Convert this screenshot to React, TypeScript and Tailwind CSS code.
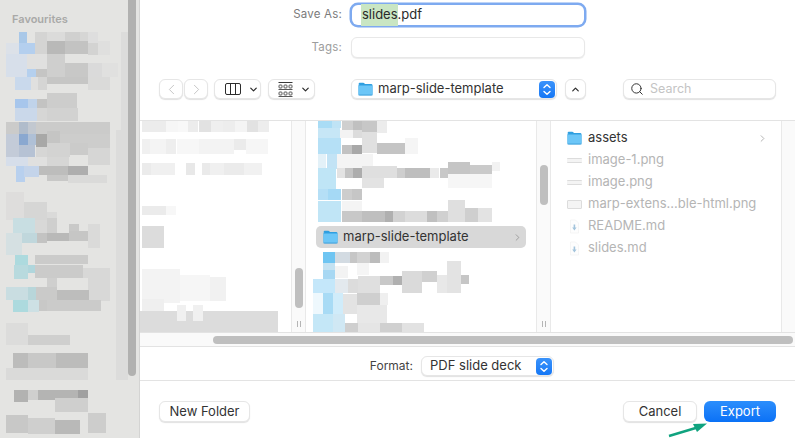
import { ChevronDown, ChevronLeft, ChevronRight, ChevronUp, Search } from "lucide-react";

type Block = [number, number, number, number, string];

// pixelated (censored) areas of the screenshot: x, y, w, h, colour
const sidebarBlocks: Block[] = [
  [121, 32, 9, 345, "#dcdcdb"], [116, 130, 14, 250, "#dcdcdb"],
  [19, 32, 8, 11, "#a9c8e8"], [19, 43, 16, 11, "#b4cfee"], [35, 32, 12, 22, "#d4d4d3"],
  [47, 32, 18, 9, "#dbdbda"], [65, 32, 15, 9, "#d0d0cf"], [80, 32, 8, 9, "#d6d6d5"], [88, 32, 10, 11, "#dedede"],
  [47, 41, 18, 13, "#b9b9b8"], [65, 41, 23, 13, "#c3c3c2"], [88, 43, 10, 12, "#d3d3d2"], [98, 41, 12, 14, "#dfdfde"],
  [6, 43, 13, 11, "#dce1e8"], [6, 54, 21, 23, "#d7dfea"], [27, 54, 20, 15, "#e0e0df"], [27, 69, 9, 8, "#b5d0ee"],
  [36, 69, 11, 8, "#c5c5c4"], [47, 54, 18, 23, "#cfcfce"], [65, 63, 23, 14, "#c8c8c7"], [88, 63, 14, 14, "#dadada"], [102, 63, 16, 14, "#e0e0df"],
  [15, 77, 16, 13, "#c9d9ec"], [31, 77, 7, 13, "#e0e0df"], [38, 77, 9, 13, "#d5d5d4"], [47, 77, 41, 7, "#c6c6c5"], [88, 77, 22, 13, "#dadad9"],
  [15, 99, 13, 9, "#a7c6ec"], [28, 99, 9, 9, "#c0d3ea"], [37, 99, 10, 9, "#c3c3c2"], [47, 93, 30, 15, "#cdcdcc"],
  [15, 108, 22, 13, "#cad8ea"], [37, 108, 10, 13, "#d6d6d5"], [47, 108, 31, 13, "#d2d2d1"],
  [6, 122, 104, 12, "#cbcbca"], [19, 122, 9, 12, "#b0bccb"], [28, 122, 8, 12, "#c2c8d0"],
  [6, 134, 13, 23, "#c3cbd8"], [19, 145, 16, 12, "#b6c2d4"], [19, 134, 9, 11, "#8aa8d0"], [28, 134, 8, 11, "#afc0d6"],
  [36, 134, 11, 13, "#a8a8a7"], [60, 134, 50, 14, "#cdcdcc"], [47, 131, 13, 12, "#c5c5c4"],
  [36, 147, 11, 10, "#d6d6d5"], [47, 143, 23, 14, "#d3d3d2"], [70, 143, 18, 12, "#cbcbca"], [88, 148, 22, 17, "#d6d6d5"],
  [6, 157, 22, 9, "#d6deea"], [28, 157, 19, 9, "#e0e0df"], [47, 157, 22, 9, "#d6d6d5"],
  [16, 166, 9, 16, "#b8d0ee"], [24, 166, 15, 11, "#c4d4ea"], [39, 166, 29, 9, "#bdbdbc"], [68, 166, 20, 9, "#aeaeae"],
  [47, 175, 21, 6, "#c8c8c7"], [68, 175, 39, 8, "#dadad9"],
  [6, 192, 18, 28, "#dedddc"], [24, 202, 23, 18, "#d6d6d5"], [47, 212, 10, 8, "#dadad9"],
  [13, 218, 22, 15, "#c8dee2"], [35, 220, 12, 13, "#d8d8d7"], [47, 218, 10, 15, "#cfcfce"], [69, 224, 10, 10, "#c9c9c8"], [88, 224, 12, 24, "#dadad9"],
  [6, 233, 16, 22, "#d5e0e2"], [22, 233, 15, 10, "#c0d7dc"], [37, 233, 10, 10, "#c3c3c2"], [47, 233, 22, 8, "#b9b9b8"], [69, 231, 19, 10, "#c6c6c5"],
  [15, 255, 13, 10, "#addade"], [35, 255, 53, 9, "#cbcbca"],
  [14, 265, 14, 14, "#b8dade"], [28, 265, 7, 8, "#b0d6dc"], [35, 265, 48, 13, "#cbcbca"], [83, 268, 27, 10, "#d8d8d7"],
  [47, 278, 10, 12, "#cfcfce"], [88, 278, 22, 23, "#d8d8d7"],
  [6, 287, 22, 13, "#c9dde1"], [28, 287, 8, 13, "#b8d6da"], [36, 287, 21, 13, "#cacac9"], [57, 290, 32, 11, "#bdbdbc"],
  [13, 300, 15, 12, "#addade"], [28, 300, 11, 12, "#cde0e4"], [39, 300, 8, 11, "#c8c8c7"], [47, 300, 54, 11, "#cbcbca"],
  [6, 323, 22, 22, "#dcdcdb"], [28, 335, 42, 10, "#cfcfce"],
  [13, 353, 15, 15, "#bcbcbb"], [28, 353, 28, 15, "#c8c8c7"], [56, 353, 32, 15, "#bcbcbb"], [6, 368, 82, 12, "#dadad9"],
  [14, 390, 14, 12, "#b2b2b1"], [28, 390, 10, 10, "#cfcfce"], [38, 390, 40, 10, "#b4b4b3"], [78, 390, 10, 10, "#a0a0a0"], [55, 398, 33, 14, "#cfcfce"],
  [6, 415, 22, 18, "#c8c8c7"], [28, 418, 27, 16, "#cfcfce"], [55, 420, 25, 14, "#b9b9b8"], [88, 413, 18, 20, "#cdcdcc"],
];

// offset by column origin (x - 140, y - 121)
const firstColumnBlocks: Block[] = [
  [2, 0, 24, 11, "#ececec"], [26, 0, 12, 11, "#f6f6f6"], [38, 0, 10, 11, "#f8f8f8"], [48, 0, 10, 11, "#ececec"], [59, 0, 12, 11, "#e2e2e2"], [71, 0, 12, 11, "#efefef"], [83, 0, 12, 11, "#ededed"], [95, 0, 12, 11, "#f4f4f4"], [107, 0, 11, 11, "#e2e2e2"], [118, 0, 11, 11, "#ededed"],
  [2, 18, 10, 15, "#f0f0f0"], [10, 18, 17, 15, "#f4f4f4"], [26, 18, 10, 15, "#eeeeee"], [37, 18, 22, 15, "#f7f7f7"], [59, 18, 35, 15, "#f3f3f3"], [94, 18, 12, 11, "#ebebeb"], [106, 18, 22, 15, "#f6f6f6"],
  [2, 42, 9, 12, "#ebebeb"], [11, 42, 24, 12, "#f0f0f0"], [46, 42, 9, 12, "#e8e8e8"], [62, 42, 8, 12, "#eaeaea"], [70, 42, 14, 12, "#f0f0f0"], [84, 42, 20, 12, "#ebebeb"], [104, 42, 18, 12, "#f1f1f1"],
  [2, 85, 24, 9, "#ebebeb"], [26, 85, 10, 9, "#f7f7f7"], [2, 105, 22, 22, "#dcdcdc"],
  [2, 148, 38, 34, "#f3f3f3"], [40, 154, 30, 26, "#f6f6f6"], [70, 156, 16, 24, "#f1f1f1"], [2, 178, 22, 12, "#efefef"],
  [0, 190, 138, 22, "#dcdcdc"], [37, 184, 9, 16, "#f0f0f0"], [53, 184, 10, 16, "#f0f0f0"],
];

const secondColumnBlocks: Block[] = [
  [12, 0, 14, 7, "#a9dcf5"], [26, 0, 9, 7, "#bfe3f5"], [36, 0, 12, 12, "#cfcfcf"], [47, 0, 9, 12, "#c0c0c0"], [56, 0, 15, 12, "#c7c7c7"], [71, 0, 10, 12, "#ececec"],
  [12, 7, 22, 10, "#c6e6f6"], [34, 9, 13, 8, "#f3f3f3"], [47, 9, 9, 8, "#dcdcdc"], [56, 11, 15, 21, "#e0e0e0"],
  [12, 17, 23, 16, "#b5e0f6"], [36, 24, 10, 9, "#c2c2c2"], [46, 24, 10, 9, "#a8a8a8"], [71, 22, 29, 11, "#c4c4c4"], [99, 17, 13, 16, "#f5f5f5"],
  [12, 33, 8, 15, "#e3f1f8"], [21, 33, 10, 15, "#c2e3f5"], [31, 33, 36, 14, "#f4f4f4"],
  [12, 47, 18, 21, "#bfe5f6"], [31, 47, 8, 10, "#e3e3e3"], [39, 47, 8, 10, "#c4c4c4"], [47, 47, 9, 10, "#adadad"], [56, 45, 35, 12, "#dfdfdf"], [91, 47, 8, 10, "#cecece"],
  [99, 47, 25, 10, "#bebebe"], [124, 47, 9, 10, "#eaeaea"], [134, 47, 8, 10, "#c8c8c8"], [142, 41, 22, 12, "#c5c5c5"], [164, 44, 22, 9, "#cacaca"], [186, 41, 8, 9, "#f2f2f2"],
  [56, 57, 22, 10, "#e3e3e3"], [142, 53, 44, 14, "#f6f6f6"],
  [12, 68, 10, 11, "#b5dff6"], [22, 68, 13, 11, "#a5d9f5"], [36, 68, 10, 11, "#cdcdcd"], [46, 68, 10, 11, "#c6c6c6"],
  [12, 80, 23, 21, "#c0e5f6"], [36, 80, 20, 10, "#f4f4f4"], [36, 90, 20, 11, "#c8c8c8"], [56, 90, 23, 11, "#bfbfbf"], [79, 90, 8, 11, "#b0b0b0"], [87, 90, 12, 11, "#d2d2d2"],
  [99, 90, 22, 11, "#dcdcdc"], [121, 90, 10, 11, "#c0c0c0"], [131, 90, 11, 11, "#d0d0d0"], [142, 79, 17, 22, "#dfdfdf"], [159, 87, 13, 14, "#cfcfcf"], [172, 87, 14, 14, "#e3e3e3"],
  [17, 131, 12, 11, "#6fc5f2"], [29, 131, 15, 11, "#d3dbe2"], [44, 131, 7, 11, "#c6c6c6"], [51, 131, 13, 11, "#d2d2d2"], [64, 131, 10, 11, "#bcbcbc"], [74, 131, 9, 11, "#f2f2f2"],
  [17, 142, 12, 8, "#c4e2f2"], [29, 145, 13, 12, "#f3f3f3"], [51, 142, 12, 12, "#f5f5f5"], [141, 140, 14, 14, "#e3e3e3"],
  [17, 149, 12, 9, "#a8d8f3"], [7, 158, 22, 14, "#c4e7fa"], [29, 158, 13, 14, "#e3e9ee"], [42, 158, 10, 14, "#dcdcdc"], [52, 155, 22, 17, "#dfdfdf"], [74, 155, 13, 9, "#c8c8c8"], [87, 155, 9, 9, "#b0b0b0"],
  [96, 150, 20, 22, "#dadada"], [116, 150, 15, 11, "#d0d0d0"], [131, 154, 10, 18, "#e8e8e8"], [141, 154, 14, 18, "#e3e3e3"], [155, 154, 8, 9, "#c6c6c6"],
  [17, 172, 10, 21, "#a8dbf5"], [7, 172, 10, 21, "#eef8fd"], [27, 172, 10, 21, "#d0ecfa"], [37, 173, 14, 20, "#e3e3e3"], [51, 172, 23, 12, "#cfcfcf"], [74, 172, 8, 12, "#efefef"], [51, 184, 30, 18, "#e8e8e8"],
  [7, 193, 20, 19, "#c4e7f7"], [27, 193, 12, 19, "#d0e8f4"], [39, 202, 13, 10, "#cfcfcf"], [52, 202, 22, 10, "#e5e5e5"], [74, 202, 22, 10, "#d0d0d0"], [96, 202, 22, 10, "#e2e2e2"],
];

const Mosaic = ({ blocks, w, h }: { blocks: Block[]; w: number; h: number }) => (
  <svg width={w} height={h} className="absolute left-0 top-0 blur-[0.5px]">
    {blocks.map(([x, y, bw, bh, fill], i) => (
      <rect key={i} x={x} y={y} width={bw} height={bh} fill={fill} />
    ))}
  </svg>
);

const Folder = ({ className = "" }: { className?: string }) => (
  <svg width="15" height="14" viewBox="0 0 15 14" className={className}>
    <path d="M0.5 2.2C0.5 1.3 1.1 0.7 2 0.7H5.2C5.8 0.7 6.1 1 6.5 1.4L7.3 2.2H0.5Z" fill="#2f9fe0" />
    <rect x="0.5" y="2" width="14" height="11.3" rx="1.4" fill="#2f9fe0" />
    <rect x="0.5" y="3.4" width="14" height="9.9" rx="1.2" fill="#6cc6f7" />
    <rect x="0.5" y="12.6" width="14" height="0.8" fill="#3d9bd6" />
  </svg>
);

const Stepper = () => (
  <span className="flex h-[17px] w-4 items-center justify-center rounded-[4px] bg-gradient-to-b from-[#3a93fb] to-[#1477f5]">
    <svg width="10" height="13" viewBox="0 0 10 13" fill="none" stroke="white" strokeWidth="1.4" strokeLinecap="round" strokeLinejoin="round">
      <path d="M2 4.6L5 1.8L8 4.6" />
      <path d="M2 8.4L5 11.2L8 8.4" />
    </svg>
  </span>
);

const ColumnsIcon = () => (
  <svg width="16" height="12" viewBox="0 0 16 12" fill="none" stroke="#2c2c2c" strokeWidth="1">
    <rect x="0.5" y="0.5" width="15" height="11" rx="1.5" />
    <path d="M5.5 0.5V11.5M10.5 0.5V11.5" />
  </svg>
);

const GalleryIcon = () => (
  <svg width="15" height="15" viewBox="0 0 15 15" fill="none" stroke="#444" strokeWidth="0.9">
    <path d="M0.5 0.5H14.5" stroke="#222" />
    <rect x="1" y="3" width="3" height="3" rx="0.8" />
    <rect x="6" y="3" width="3" height="3" rx="0.8" />
    <rect x="11" y="3" width="3" height="3" rx="0.8" />
    <path d="M0.5 7.5H14.5" />
    <rect x="1" y="10" width="3" height="3" rx="0.8" />
    <rect x="6" y="10" width="3" height="3" rx="0.8" />
    <rect x="11" y="10" width="3" height="3" rx="0.8" />
    <path d="M0.5 14.5H14.5" />
  </svg>
);

const ImageIcon = ({ tall = false }: { tall?: boolean }) =>
  tall ? (
    <span className="h-[9px] w-[15px] rounded-[1px] border border-[#dcdcdc] bg-[#f4f4f4]" />
  ) : (
    <span className="h-[5px] w-[15px] rounded-[1px] border-y border-[#dcdcdc] bg-[#f4f4f4]" />
  );

const MdIcon = () => (
  <svg width="15" height="15" viewBox="0 0 15 15" fill="none">
    <path d="M3.5 1H8.5L11.5 4V14H3.5Z" fill="#fdfdfd" stroke="#f0f0f0" strokeWidth="0.7" />
    <path d="M6.6 5.5H8.2V8.5H9.6L7.4 11.5L5.2 8.5H6.6Z" fill="#a3c4dc" />
  </svg>
);

const Track = ({ thumbTop }: { thumbTop: number | null }) => (
  <div className="flex h-full w-[15px] shrink-0 flex-col items-center border-x border-[#e9e9e9] bg-[#fafafa]">
    {thumbTop === 44 && <div className="mt-[44px] h-10 w-2 rounded bg-[#bfbfbf]" />}
    {thumbTop === 147 && <div className="mt-[147px] h-10 w-2 rounded bg-[#bfbfbf]" />}
    <div className="mb-[5px] mt-auto flex gap-[2px]">
      <span className="h-[6px] w-px bg-[#b5b5b5]" />
      <span className="h-[6px] w-px bg-[#b5b5b5]" />
    </div>
  </div>
);

const buttonClass = "rounded-[6px] border border-[#e6e6e6] bg-white shadow-[0_1px_1px_rgba(0,0,0,0.12)]";

const files = [
  { name: "image-1.png", icon: <ImageIcon /> },
  { name: "image.png", icon: <ImageIcon /> },
  { name: "marp-extens...ble-html.png", icon: <ImageIcon tall /> },
  { name: "README.md", icon: <MdIcon /> },
  { name: "slides.md", icon: <MdIcon /> },
];

export default function App() {
  return (
    <div className="relative flex h-[438px] w-[795px] overflow-hidden bg-white font-['Inter',sans-serif] text-[13px] text-[#2a2a2a] antialiased">
      {/* SIDEBAR */}
      <aside className="flex w-[140px] shrink-0 border-r border-[#d4d4d3] bg-[#e4e4e2] pr-[3px]">
        <div className="relative flex-1 overflow-hidden pl-3 pt-[11px]">
          <Mosaic blocks={sidebarBlocks} w={128} h={438} />
          <p className="relative text-[11px] font-semibold text-[#a9a9a8]">Favourites</p>
        </div>
        <div className="h-[376px] w-2 rounded-b bg-[#b1b1b0]" />
      </aside>

      <main className="flex min-w-0 flex-1 flex-col">
        {/* SAVE AS + TOOLBAR */}
        <section className="h-[120px] shrink-0">
          <div className="flex h-[37px] items-center pb-[7px]">
            <span className="w-[202px] text-right text-[11.5px] tracking-[0.2px] text-[#7b7b7b]">Save As:</span>
            <div className="ml-[10px] flex h-5 w-[232px] items-center rounded-[6px] bg-white pl-[9px] shadow-[0_0_0_2.5px_#7eaaf0]">
              <span className="bg-[#c9e6c3] py-[1px] pl-px">slides</span>
              <span>.pdf</span>
            </div>
          </div>
          <div className="flex h-[21px] items-center">
            <span className="w-[202px] text-right text-[11.5px] tracking-[0.2px] text-[#9d9d9d]">Tags:</span>
            <div className="ml-[9px] h-[21px] w-[234px] rounded-[6px] border border-[#e8e8e8] bg-white shadow-[0_1px_1px_rgba(0,0,0,0.08)]" />
          </div>
          <div className="mt-[21px] flex h-5 items-center pl-[19px]">
            <button className={`${buttonClass} flex h-5 w-6 items-center justify-center text-[#bdbdbd]`}>
              <ChevronLeft size={17} strokeWidth={1.2} />
            </button>
            <button className={`${buttonClass} ml-px flex h-5 w-6 items-center justify-center text-[#bdbdbd]`}>
              <ChevronRight size={17} strokeWidth={1.2} />
            </button>
            <button className={`${buttonClass} ml-[6px] flex h-5 w-[47px] items-center gap-[7px] pl-[10px]`}>
              <ColumnsIcon />
              <ChevronDown size={11} strokeWidth={2.6} />
            </button>
            <button className={`${buttonClass} ml-[7px] flex h-5 w-[47px] items-center gap-[7px] pl-[9px]`}>
              <GalleryIcon />
              <ChevronDown size={11} strokeWidth={2.6} />
            </button>
            <div className={`${buttonClass} ml-[36px] flex h-5 w-[206px] items-center pl-[6px] pr-[1px]`}>
              <Folder />
              <span className="ml-[5px] flex-1 text-[#333]">marp-slide-template</span>
              <Stepper />
            </div>
            <button className={`${buttonClass} ml-2 flex h-5 w-[21px] items-center justify-center`}>
              <ChevronUp size={11} strokeWidth={2.6} />
            </button>
            <div className={`${buttonClass} ml-[37px] flex h-5 w-[153px] items-center pl-[6px]`}>
              <Search size={14} strokeWidth={1.7} className="text-[#333]" />
              <span className="ml-[6px] text-[12.5px] text-[#c4c4c4]">Search</span>
            </div>
          </div>
        </section>

        {/* COLUMN BROWSER */}
        <section className="flex h-[213px] shrink-0 border-y border-[#e3e3e3]">
          <div className="relative h-full w-[151px] shrink-0 overflow-hidden">
            <Mosaic blocks={firstColumnBlocks} w={151} h={212} />
          </div>
          <Track thumbTop={147} />
          <div className="relative h-full w-[230px] shrink-0 overflow-hidden pl-[10px] pt-[105px]">
            <Mosaic blocks={secondColumnBlocks} w={230} h={212} />
            <div className="relative flex h-[22px] w-[210px] items-center rounded-[5px] bg-[#d8d8d8] pl-[7px] pr-[3px]">
              <Folder />
              <span className="ml-[5px] flex-1 text-[#333]">marp-slide-template</span>
              <ChevronRight size={11} strokeWidth={1.6} className="text-[#8a8a8a]" />
            </div>
          </div>
          <Track thumbTop={44} />
          <div className="h-full w-[230px] shrink-0 pl-[16px] pr-[13px] pt-[6px]">
            <div className="flex h-[22px] items-center">
              <Folder />
              <span className="ml-[6px] flex-1 text-[#333]">assets</span>
              <ChevronRight size={11} strokeWidth={1.6} className="text-[#9a9a9a]" />
            </div>
            {files.map((file) => (
              <div key={file.name} className="flex h-[22px] items-center">
                <span className="flex w-[15px] justify-center">{file.icon}</span>
                <span className="ml-[6px] text-[#b5b5b5]">{file.name}</span>
              </div>
            ))}
          </div>
          <div className="h-full flex-1 border-l border-[#e9e9e9] bg-[#fafafa]" />
        </section>

        {/* HORIZONTAL SCROLL */}
        <div className="flex h-[14px] shrink-0 items-center border-b border-[#e3e3e3] bg-[#fafafa] pl-[73px] pr-[2px]">
          <div className="h-2 flex-1 rounded bg-[#bfbfbf]" />
        </div>

        {/* FORMAT */}
        <div className="flex h-[34px] shrink-0 items-center border-b border-[#e3e3e3] pt-[5px]">
          <span className="w-[273px] text-right text-[12px] text-[#444]">Format:</span>
          <div className={`${buttonClass} ml-2 flex h-5 w-[133px] items-center pl-2 pr-[1px]`}>
            <span className="flex-1 text-[#333]">PDF slide deck</span>
            <Stepper />
          </div>
        </div>

        {/* FOOTER */}
        <div className="flex flex-1 items-start pl-[19px] pt-5">
          <button className={`${buttonClass} h-[21px] w-[91px] text-[#333]`}>New Folder</button>
          <button className={`${buttonClass} ml-auto h-[21px] w-[74px] text-[#333]`}>Cancel</button>
          <button className="ml-[7px] mr-[19px] h-[21px] w-[72px] rounded-[6px] bg-gradient-to-b from-[#2b8efc] to-[#0a71f6] text-white">Export</button>
        </div>
      </main>

      {/* annotation arrow */}
      <svg width="50" height="20" viewBox="0 0 50 20" className="absolute left-[665px] top-[418px]">
        <path d="M4 18L34 9" stroke="#10a37f" strokeWidth="2.4" />
        <path d="M28 6L42 5.5L32 14Z" fill="#10a37f" />
      </svg>
    </div>
  );
}
